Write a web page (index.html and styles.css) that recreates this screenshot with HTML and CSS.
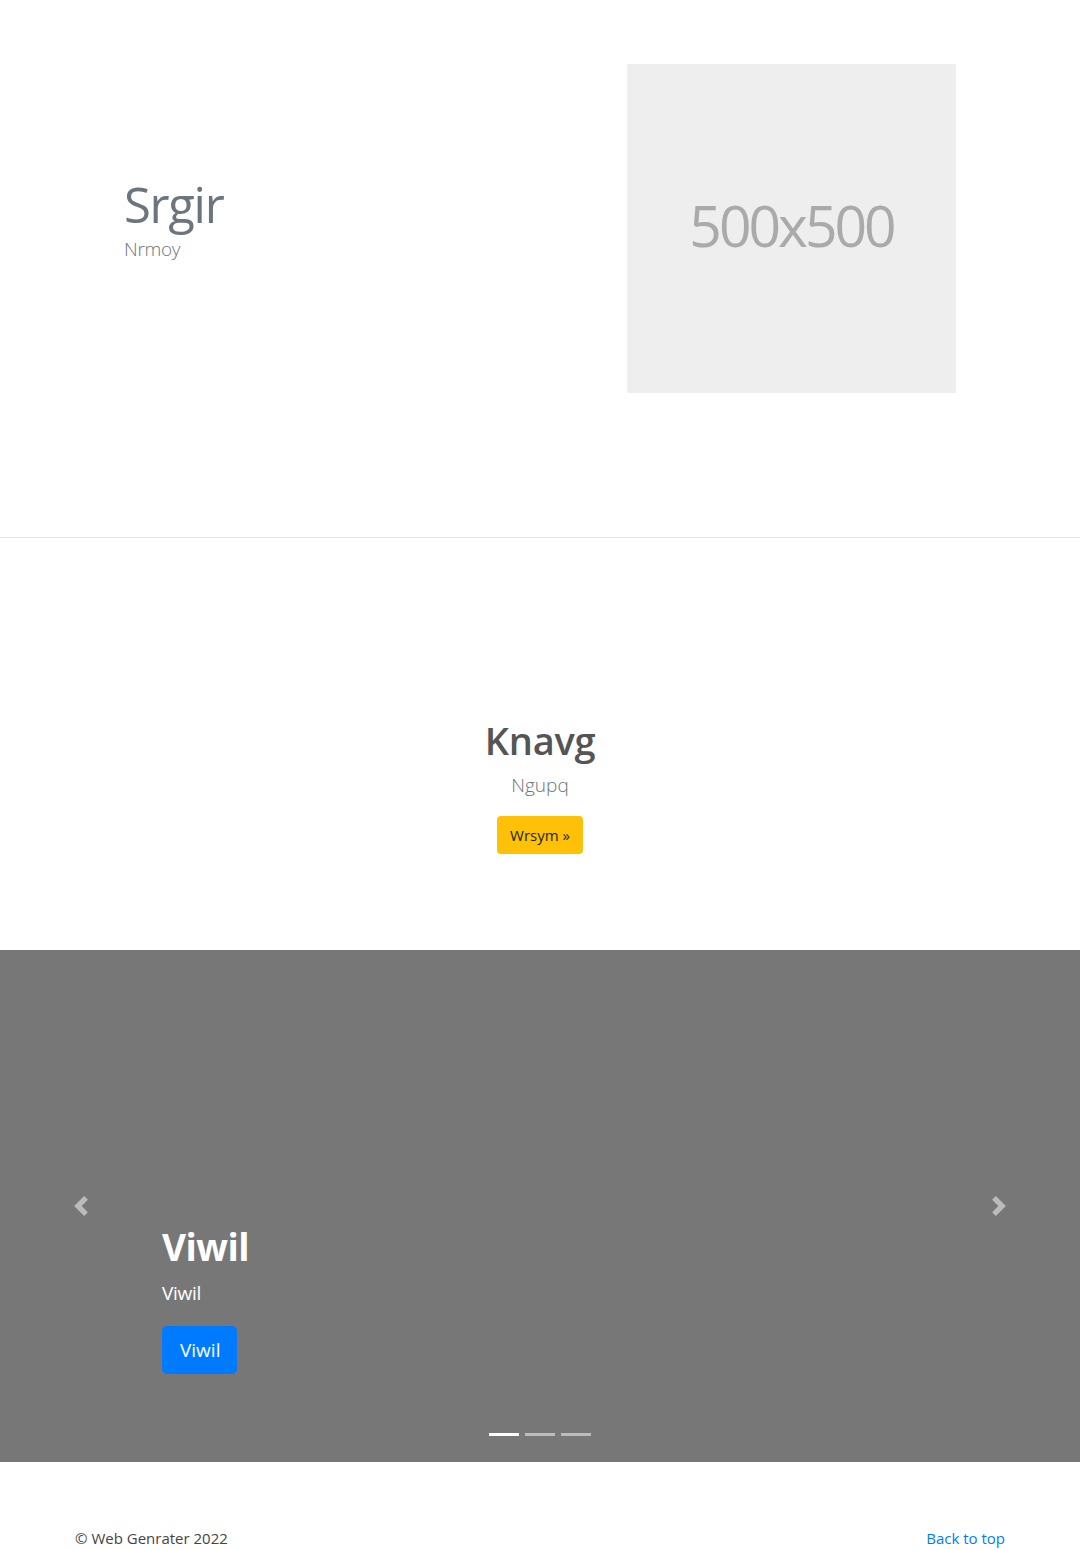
FILE: index.html
```html
<!DOCTYPE html>
<html lang="en">
<head>
<meta charset="utf-8">
<title>Srgir</title>
<link rel="stylesheet" href="styles.css">
</head>
<body>
<section class="hero">
  <div class="hero-text">
    <h1 class="hero-title">Srgir</h1>
    <p class="hero-lead">Nrmoy</p>
  </div>
  <div class="placeholder"><span class="placeholder-label">500x500</span></div>
</section>
<hr class="divider">
<section class="cta">
  <h2 class="cta-title">Knavg</h2>
  <p class="cta-lead">Ngupq</p>
  <a class="btn btn-warning" href="#">Wrsym »</a>
</section>
<section class="carousel">
  <a class="carousel-control control-prev" href="#">
    <svg class="control-icon" viewBox="0 0 8 8" width="20" height="20"><path d="M5.25 0l-4 4 4 4 1.5-1.5L4.25 4l2.5-2.5L5.25 0z"/></svg>
  </a>
  <div class="carousel-caption">
    <h2 class="caption-title">Viwil</h2>
    <p class="caption-text">Viwil</p>
    <a class="btn btn-primary btn-lg" href="#">Viwil</a>
  </div>
  <a class="carousel-control control-next" href="#">
    <svg class="control-icon" viewBox="0 0 8 8" width="20" height="20"><path d="M2.75 0l-1.5 1.5L3.75 4l-2.5 2.5L2.75 8l4-4-4-4z"/></svg>
  </a>
  <ol class="indicators">
    <li class="indicator active"></li>
    <li class="indicator"></li>
    <li class="indicator"></li>
  </ol>
</section>
<footer class="footer">
  <p class="copyright">© Web Genrater 2022</p>
  <a class="back-top" href="#">Back to top</a>
</footer>
</body>
</html>
```
FILE: styles.css
```css
* { box-sizing: border-box; }
body {
  margin: 0;
  font-family: "Open Sans", "Noto Sans", Arial, sans-serif;
  color: #212529;
  background: #fff;
}
a { text-decoration: none; }

.hero {
  display: flex;
  align-items: center;
  padding: 64px 124px 144px 124px;
}
.hero-text { flex: 1; margin-bottom: 17px; }
.hero-title {
  margin: 0 0 2px;
  font-size: 49px;
  font-weight: 400;
  line-height: 56px;
  letter-spacing: -1.3px;
  color: #6c757d;
}
.hero-lead {
  margin: 0;
  font-size: 19px;
  font-weight: 300;
  line-height: 30px;
  color: #6c757d;
  letter-spacing: -0.3px;
}
.placeholder {
  width: 329px;
  height: 329px;
  background: #eee;
  display: flex;
  align-items: center;
  justify-content: center;
  padding-bottom: 7px;
}
.placeholder-label {
  font-size: 57px;
  color: #aaa;
  letter-spacing: -3px;
  line-height: 1;
}

.divider {
  margin: 0;
  border: 0;
  border-top: 1px solid #e6e6e6;
}

.cta {
  display: flex;
  flex-direction: column;
  align-items: center;
  padding: 178px 0 96px;
}
.cta-title {
  margin: 0;
  font-size: 38px;
  font-weight: 600;
  line-height: 48px;
  color: #555;
  letter-spacing: -0.3px;
}
.cta-lead {
  margin: 6px 0 16px;
  font-size: 19px;
  font-weight: 300;
  line-height: 30px;
  color: #6c757d;
}
.btn {
  display: inline-block;
  border-radius: 4px;
  font-weight: 400;
}
.btn-warning {
  background: #ffc107;
  color: #212529;
  font-size: 15px;
  line-height: 24px;
  padding: 7px 13px;
}
.btn-primary {
  background: #007bff;
  color: #fff;
}
.btn-lg {
  font-size: 19px;
  line-height: 30px;
  padding: 9px 17px 9px 18px;
  border-radius: 5px;
}

.carousel {
  position: relative;
  height: 512px;
  background: #777;
}
.carousel-control {
  position: absolute;
  top: 0;
  bottom: 0;
  width: 15%;
  display: flex;
  align-items: center;
  justify-content: center;
  opacity: 0.5;
}
.control-prev { left: 0; }
.control-next { right: 0; }
.control-icon { fill: #fff; display: block; }
.carousel-caption {
  position: absolute;
  left: 15%;
  right: 15%;
  bottom: 88px;
  color: #fff;
}
.caption-title {
  margin: 0 0 8px;
  font-size: 37px;
  font-weight: 700;
  line-height: 48px;
  letter-spacing: -0.5px;
}
.caption-text {
  margin: 0 0 19px;
  font-size: 19px;
  line-height: 28px;
  letter-spacing: -0.3px;
}
.indicators {
  position: absolute;
  left: 0;
  right: 0;
  bottom: 26px;
  margin: 0;
  padding: 0;
  list-style: none;
  display: flex;
  justify-content: center;
  gap: 6px;
}
.indicator {
  width: 30px;
  height: 3px;
  background: #fff;
  opacity: 0.5;
}
.indicator.active { opacity: 1; }

.footer {
  display: flex;
  justify-content: space-between;
  align-items: center;
  padding: 64px 75px 0;
  font-size: 15px;
  line-height: 24px;
}
.copyright { margin: 0; color: #444; }
.back-top { color: #007bff; }
```
